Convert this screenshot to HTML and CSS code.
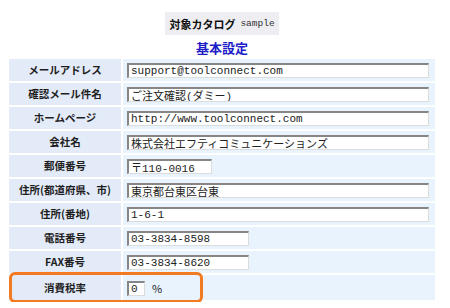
FILE: index.html
```html
<!DOCTYPE html>
<html lang="ja">
<head>
	<meta charset="UTF-8">
	<title>基本設定</title>
	<link rel="stylesheet" href="styles.css">
</head>
<body>
	<div class="page">
		<div class="catalog">
			<span class="catalog-label">対象カタログ</span>
			<span class="catalog-name">sample</span>
		</div>
		<h1 class="heading">基本設定</h1>
		<div class="settings">
			<table class="form-table">
				<tr>
					<th>メールアドレス</th>
					<td><input type="text" class="field wide" value="support@toolconnect.com"></td>
				</tr>
				<tr>
					<th>確認メール件名</th>
					<td><input type="text" class="field wide" value="ご注文確認(ダミー)"></td>
				</tr>
				<tr>
					<th>ホームページ</th>
					<td><input type="text" class="field wide" value="http://www.toolconnect.com"></td>
				</tr>
				<tr>
					<th>会社名</th>
					<td><input type="text" class="field wide" value="株式会社エフティコミュニケーションズ"></td>
				</tr>
				<tr>
					<th>郵便番号</th>
					<td><input type="text" class="field zip" value="〒110-0016"></td>
				</tr>
				<tr>
					<th>住所(都道府県、市)</th>
					<td><input type="text" class="field wide" value="東京都台東区台東"></td>
				</tr>
				<tr>
					<th>住所(番地)</th>
					<td><input type="text" class="field wide" value="1-6-1"></td>
				</tr>
				<tr>
					<th>電話番号</th>
					<td><input type="text" class="field tel" value="03-3834-8598"></td>
				</tr>
				<tr>
					<th>FAX番号</th>
					<td><input type="text" class="field tel" value="03-3834-8620"></td>
				</tr>
				<tr class="tax-row">
					<th>消費税率</th>
					<td><input type="text" class="field rate" value="0"><span class="unit">%</span></td>
				</tr>
			</table>
			<div class="highlight"></div>
		</div>
	</div>
</body>
</html>
```

FILE: styles.css
```css
body{
	margin: 0;
	background: #ffffff;
	font-family: "Noto Sans CJK JP", "Liberation Sans", sans-serif;
	color: #222222;
}
.page{
	width: 430px;
	margin-left: 7px;
	padding-top: 12px;
}
.catalog{
	width: 114px;
	height: 23px;
	margin: 0 auto;
	background: #eeeef2;
	display: flex;
	align-items: center;
	justify-content: center;
	gap: 5px;
}
.catalog-label{
	font-size: 11px;
	line-height: 14px;
	font-weight: bold;
	color: #111111;
}
.catalog-name{
	font-family: "Liberation Mono", monospace;
	font-size: 9.5px;
	line-height: 14px;
	color: #333333;
}
.heading{
	margin: 3px 0 0 0;
	height: 19px;
	line-height: 19px;
	text-align: center;
	font-size: 13px;
	font-weight: bold;
	color: #1d1dc8;
}
.settings{
	position: relative;
}
.form-table{
	border-collapse: separate;
	border-spacing: 2px;
	width: 430px;
}
.form-table th{
	width: 112px;
	height: 22px;
	padding: 0;
	background: #e3eaf8;
	font-size: 10.5px;
	line-height: 14px;
	font-weight: bold;
	color: #1e1e1e;
	text-align: center;
	vertical-align: middle;
	white-space: nowrap;
}
.form-table td{
	height: 22px;
	padding: 0 0 0 4px;
	background: #e9f3fe;
	font-size: 11px;
	line-height: 14px;
	vertical-align: middle;
}
.form-table .tax-row th,
.form-table .tax-row td{
	height: 25px;
}
.field{
	box-sizing: border-box;
	display: inline-block;
	height: 15px;
	margin: 0;
	padding: 0 2px;
	border-top: 2px solid #868686;
	border-left: 2px solid #868686;
	border-right: 1px solid #dcdcdc;
	border-bottom: 1px solid #dcdcdc;
	background: #ffffff;
	font-family: "Liberation Mono", "Noto Sans CJK JP", monospace;
	font-size: 11px;
	line-height: 12px;
	color: #222222;
	vertical-align: middle;
}
.wide{
	width: 302px;
}
.zip{
	width: 85px;
}
.tel{
	width: 122px;
}
.rate{
	width: 18px;
}
.unit{
	margin-left: 7px;
	font-size: 11px;
	line-height: 14px;
	vertical-align: middle;
}
.highlight{
	position: absolute;
	left: 2px;
	top: 215px;
	width: 188px;
	height: 25px;
	border: 3px solid #f27b22;
	border-radius: 6px;
}
```
